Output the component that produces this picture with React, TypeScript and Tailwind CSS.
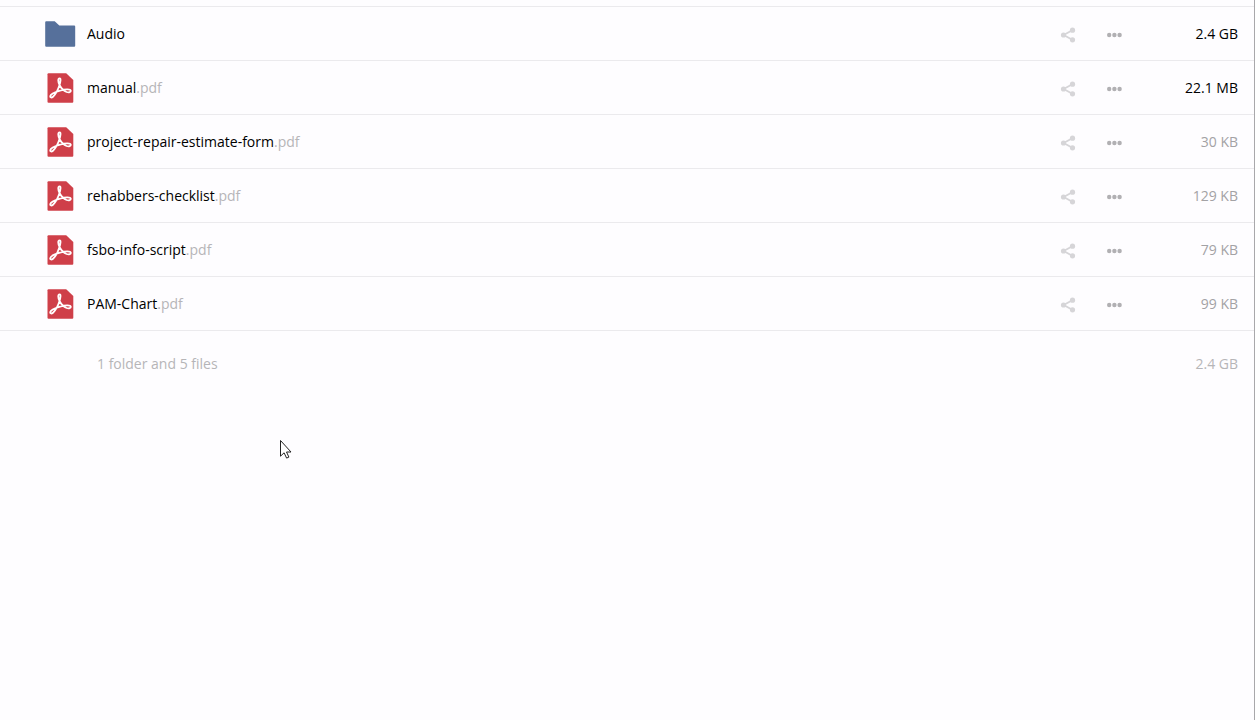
import React from 'react';

type Entry = {
  name: string;
  ext?: string;
  size: string;
  sizeClass: string;
};

const entries: Entry[] = [
  { name: 'Audio', size: '2.4 GB', sizeClass: 'text-black' },
  { name: 'manual', ext: '.pdf', size: '22.1 MB', sizeClass: 'text-black' },
  { name: 'project-repair-estimate-form', ext: '.pdf', size: '30 KB', sizeClass: 'text-[#a3a2a5]' },
  { name: 'rehabbers-checklist', ext: '.pdf', size: '129 KB', sizeClass: 'text-[#a3a2a5]' },
  { name: 'fsbo-info-script', ext: '.pdf', size: '79 KB', sizeClass: 'text-[#a3a2a5]' },
  { name: 'PAM-Chart', ext: '.pdf', size: '99 KB', sizeClass: 'text-[#a3a2a5]' },
];

const FolderIcon = () => (
  <svg viewBox="0 0 32 32" className="size-8 shrink-0" aria-hidden="true">
    <path
      d="M2.2 3.3h8.500l4.600 4.300H30.200a1 1 0 0 1 1 1V27.800a1 1 0 0 1-1 1H2.200a1 1 0 0 1-1-1V4.300a1 1 0 0 1 1-1z"
      fill="#56709b"
    />
  </svg>
);

const PdfIcon = () => (
  <svg viewBox="0 0 32 32" className="size-8 shrink-0" aria-hidden="true">
    <path
      d="M4.500 1.200H22.200L29.300 8.100V29.800a1 1 0 0 1-1 1H4.500a1 1 0 0 1-1-1V2.200a1 1 0 0 1 1-1z"
      fill="#cf3f49"
    />
    <path
      d="M15.600 6.300c-1.900 0-1.600 3.400-.1 6.700 1.700 3.200 4.300 6 7.100 7 2.500.8 4.400.1 4.200-1.300-.3-1.900-5.900-1.500-10.800-.1-4.400 1.200-9.400 3.700-9.800 5.600-.2 1.400 1.300 1.800 2.800.5 2.300-2 5.200-7.300 6.500-11.600 1-3.500 1.600-6.800.1-6.800z"
      fill="none"
      stroke="#fff"
      strokeWidth="1.800"
      strokeLinejoin="round"
    />
  </svg>
);

const ShareIcon = () => (
  <svg viewBox="0 0 16 16" className="size-4" aria-hidden="true">
    <path d="M12.300 3.200 3.700 8l8.600 4.800" fill="none" stroke="#d6d5d8" strokeWidth="1.800" />
    <g fill="#d6d5d8">
      <circle cx="3.500" cy="8" r="2.600" />
      <circle cx="12.500" cy="3.200" r="2.600" />
      <circle cx="12.500" cy="12.800" r="2.600" />
    </g>
  </svg>
);

const MoreIcon = () => (
  <svg viewBox="0 0 16 16" className="size-4" aria-hidden="true">
    <g fill="#b1b0b3">
      <circle cx="3.200" cy="8" r="2.200" />
      <circle cx="8.400" cy="8" r="2.200" />
      <circle cx="13.600" cy="8" r="2.200" />
    </g>
  </svg>
);

const Cursor = () => (
  <svg viewBox="0 0 12 20" className="absolute top-[440px] left-[280px] h-5 w-3" aria-hidden="true">
    <path
      d="M.5.5v15.700l3.600-3.400 2.500 5.300 2.300-1-2.400-5.100H11z"
      fill="#fff"
      stroke="#222"
      strokeWidth="1"
    />
  </svg>
);

const FileRow: React.FC<{ entry: Entry }> = ({ entry }) => (
  <tr className="h-[54px] border-b border-[#ebeaed]">
    <td className="p-0 pl-11">
      <a href="#" className="flex items-center gap-[11px]">
        {entry.ext ? <PdfIcon /> : <FolderIcon />}
        <span className="text-black">
          {entry.name}
          {entry.ext && <span className="text-[#b6b5b8]">{entry.ext}</span>}
        </span>
      </a>
    </td>
    <td className="w-20 p-0">
      <div className="flex items-center gap-[30px] pt-0.5">
        <button type="button" aria-label={`Share ${entry.name}`}>
          <ShareIcon />
        </button>
        <button type="button" aria-label={`Actions for ${entry.name}`}>
          <MoreIcon />
        </button>
      </div>
    </td>
    <td className={`w-[114px] p-0 pr-4 text-right ${entry.sizeClass}`}>{entry.size}</td>
  </tr>
);

export default function App() {
  return (
    <main className="relative min-h-screen border-r border-[#a9a8ab] bg-[#fefdff] pt-1.5 font-['Open_Sans','Noto_Sans',sans-serif] text-sm">
      <table className="w-full border-collapse border-t border-[#ebeaed]">
        <tbody>
          {entries.map((entry) => (
            <FileRow key={entry.name} entry={entry} />
          ))}
        </tbody>
        <tfoot>
          <tr className="h-[66px] text-[#b6b5b8]">
            <td className="p-0 pl-[97px]">1 folder and 5 files</td>
            <td className="p-0" />
            <td className="p-0 pr-4 text-right">2.4 GB</td>
          </tr>
        </tfoot>
      </table>
      <Cursor />
    </main>
  );
}
